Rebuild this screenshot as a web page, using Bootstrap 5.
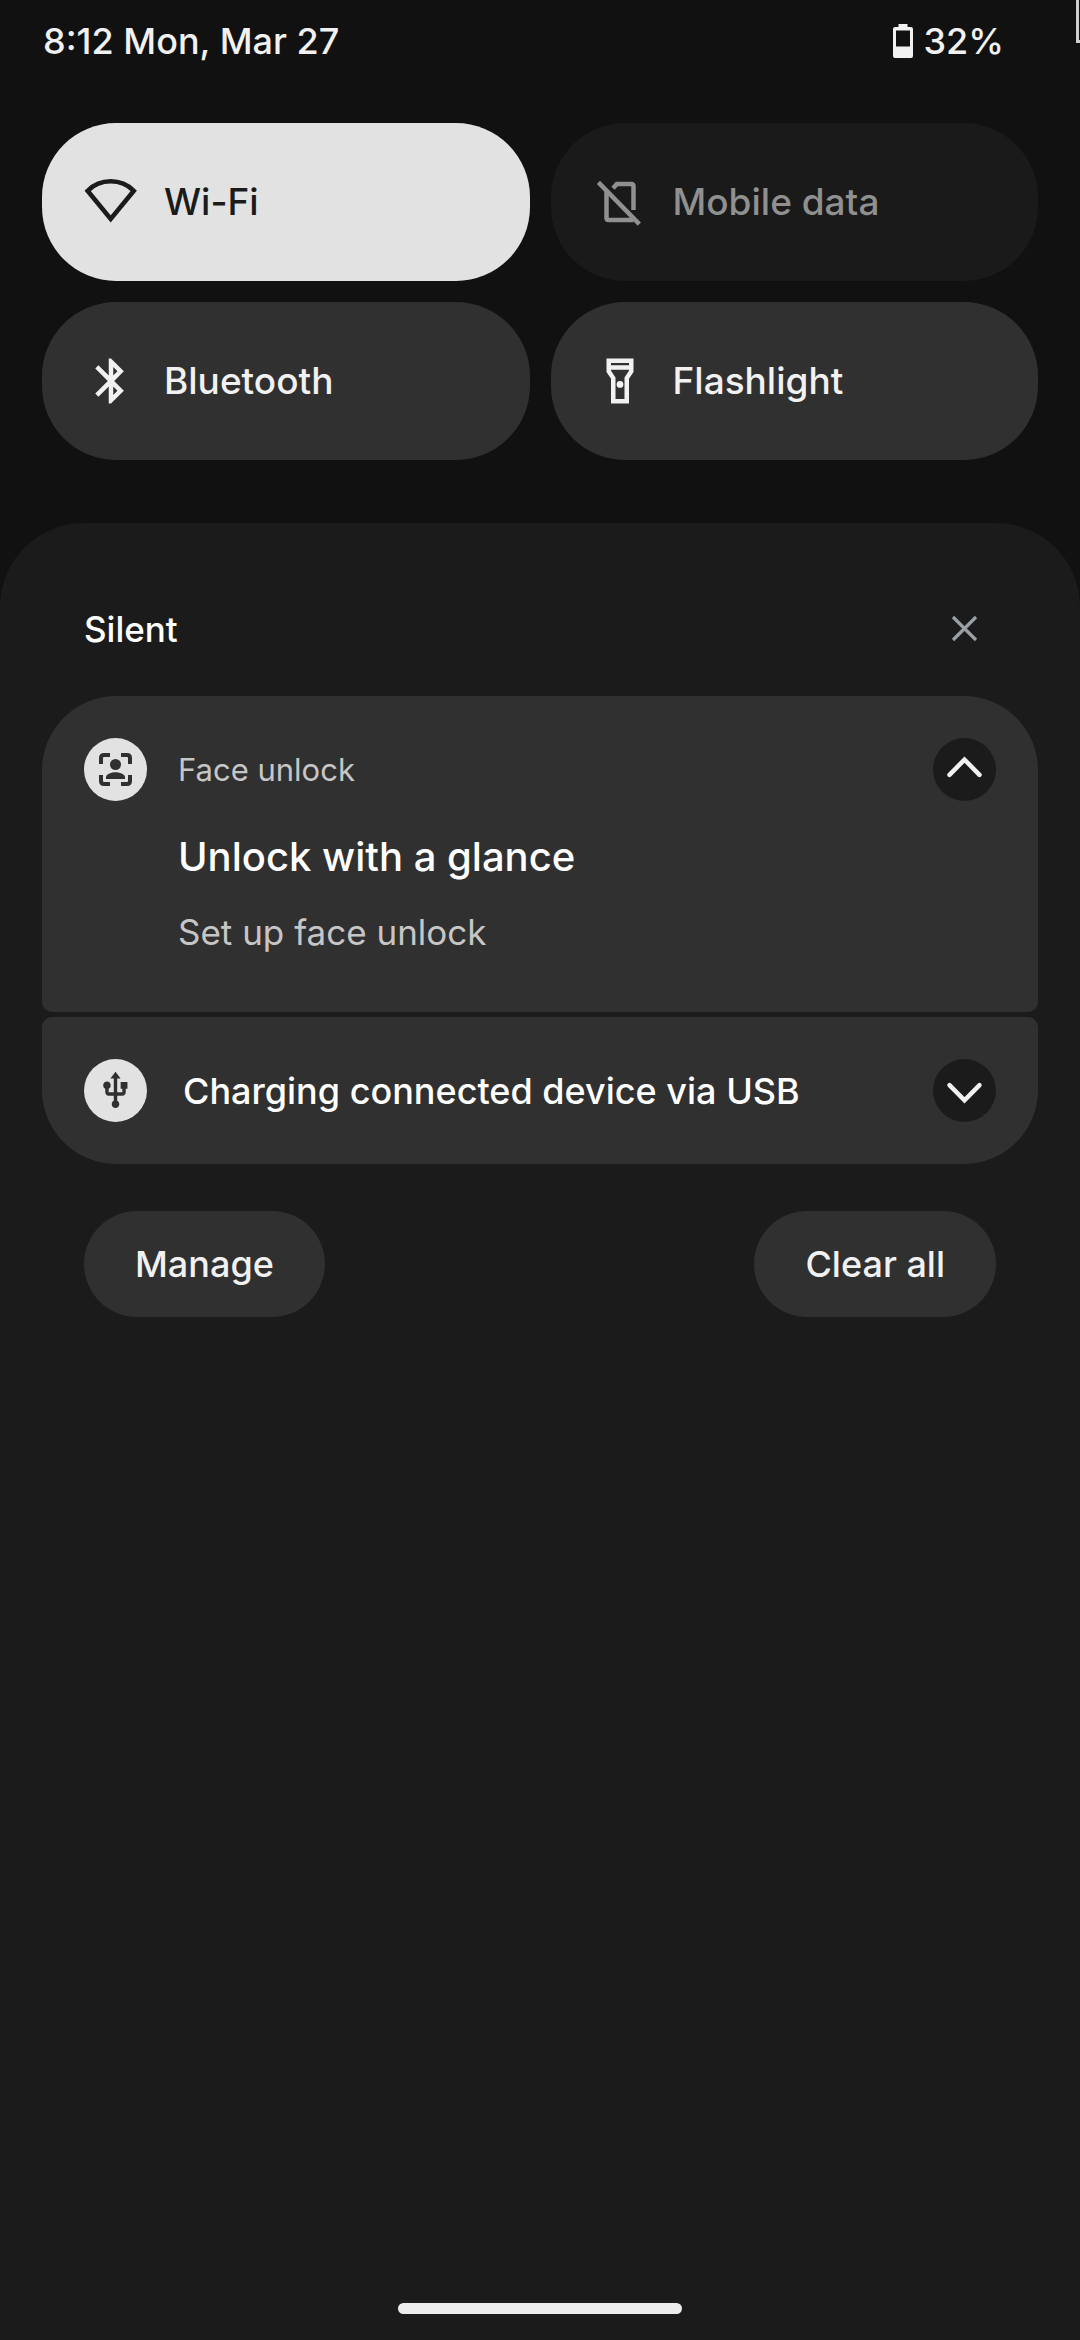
<!DOCTYPE html>
<html lang="en" data-bs-theme="dark">
<head>
<meta charset="utf-8">
<meta name="viewport" content="width=device-width, initial-scale=1">
<title>Notification shade</title>
<link href="https://cdn.jsdelivr.net/npm/bootstrap@5.3.0/dist/css/bootstrap.min.css" rel="stylesheet">
<style>
  :root {
    --shade: #111111;
    --panel: #1b1b1b;
    --surface: #303030;
    --accent: #e2e2e2;
    --ink: #f1f1f1;
    --muted: #c6c6c6;
  }
  body {
    background: var(--shade);
    color: var(--ink);
    font-family: Inter, Roboto, sans-serif;
    font-size: 36px;
    line-height: 48px;
  }
  svg { display: block; flex: none; }
  .status-bar { height: 82px; padding: 0 76px 0 43px; font-size: 36px; font-weight: 500; }
  .battery { gap: 8px; }
  .quick-tiles { padding: 41px 42px 63px; }
  .quick-tiles .row { --bs-gutter-x: 21px; --bs-gutter-y: 21px; }
  .tile {
    --bs-btn-color: var(--ink);
    --bs-btn-bg: var(--surface);
    --bs-btn-hover-bg: #3a3a3a;
    --bs-btn-hover-color: var(--ink);
    --bs-btn-border-width: 0;
    --bs-btn-border-radius: 74px;
    --bs-btn-padding-x: 42px;
    --bs-btn-font-size: 37px;
    --bs-btn-font-weight: 500;
    --bs-btn-disabled-bg: #1a1a1a;
    --bs-btn-disabled-color: #8f908f;
    --bs-btn-disabled-opacity: 1;
    height: 158px;
    gap: 26px;
  }
  .tile-on { --bs-btn-color: #1b1b1b; --bs-btn-bg: var(--accent); --bs-btn-hover-bg: #efefef; --bs-btn-hover-color: #1b1b1b; }
  .shade-panel { background: var(--panel); border-radius: 84px 84px 0 0; padding: 74px 42px 26px; }
  .section-head { padding: 0 42px; height: 63px; margin-bottom: 36px; }
  .section-title { font-size: 35px; font-weight: 500; line-height: 48px; }
  .round-btn { width: 63px; height: 63px; }
  .expander { background: var(--panel); }
  .stack { gap: 5px; }
  .notice { background: var(--surface); padding: 42px; border-radius: 10px; }
  .notice:first-child { border-top-left-radius: 74px; border-top-right-radius: 74px; }
  .notice:last-child { border-bottom-left-radius: 74px; border-bottom-right-radius: 74px; }
  .app-icon { width: 63px; height: 63px; background: var(--accent); }
  .notice-head { gap: 31px; }
  .notice-compact { gap: 36px; }
  .app-name { font-size: 31px; color: var(--muted); }
  .notice-body { padding: 31px 0 14px 94px; }
  .notice-title { font-size: 40px; font-weight: 500; line-height: 50px; margin-bottom: 26px; }
  .notice-text { font-size: 35px; color: var(--muted); }
  .notice-line { font-weight: 500; color: #fff; }
  .shade-actions { padding: 47px 42px 0; }
  .pill {
    --bs-btn-color: var(--ink);
    --bs-btn-bg: var(--surface);
    --bs-btn-hover-bg: #3a3a3a;
    --bs-btn-hover-color: var(--ink);
    --bs-btn-border-width: 0;
    --bs-btn-font-size: 36px;
    --bs-btn-font-weight: 500;
    --bs-btn-padding-x: 51px;
    height: 106px;
  }
  .home-bar { width: 284px; height: 11px; background: #ececec; }
  .edge-frame { width: 4px; height: 43px; border: 3px solid #cfcfcf; border-width: 0 0 3px 3px; }
</style>
</head>
<body class="d-flex flex-column min-vh-100">
  <div class="edge-frame position-absolute top-0 end-0" aria-hidden="true"></div>

  <header class="status-bar d-flex align-items-center justify-content-between">
    <span>8:12 Mon, Mar 27</span>
    <span class="battery d-flex align-items-center">
      <svg width="24" height="36" viewBox="0 0 24 36" fill="currentColor" aria-hidden="true">
        <path fill-rule="evenodd" d="M7.500 1h9v3H20a2 2 0 0 1 2 2v27a2 2 0 0 1-2 2H4a2 2 0 0 1-2-2V6a2 2 0 0 1 2-2h3.500zM5 7.500v16h14v-16z"/>
      </svg>
      <span>32%</span>
    </span>
  </header>

  <section class="quick-tiles" aria-label="Quick settings">
    <div class="row">
      <div class="col-6">
        <button type="button" class="btn tile tile-on w-100 d-flex align-items-center" aria-pressed="true">
          <svg width="54" height="54" viewBox="0 0 54 54" fill="none" stroke="currentColor" stroke-width="4.500" aria-hidden="true">
            <path d="M3.600 15.800A33 33 0 0 1 49.800 15.800L26.700 44z"/>
          </svg>
          <span>Wi-Fi</span>
        </button>
      </div>
      <div class="col-6">
        <button type="button" class="btn tile w-100 d-flex align-items-center" disabled>
          <svg width="54" height="54" viewBox="0 0 24 24" fill="none" stroke="currentColor" stroke-width="2" aria-hidden="true">
            <path d="M6 7V19q0 1 1 1H18M8.900 5.900L10.600 4H17q1 0 1 1V15.500"/>
            <path d="M2.400 3.300L20.600 21.800"/>
          </svg>
          <span>Mobile data</span>
        </button>
      </div>
      <div class="col-6">
        <button type="button" class="btn tile w-100 d-flex align-items-center" aria-pressed="false">
          <svg width="54" height="54" viewBox="0 0 24 24" fill="currentColor" aria-hidden="true">
            <path d="M17.710 7.710L12 2h-1v7.590L6.410 5 5 6.410 10.590 12 5 17.590 6.410 19 11 14.410V22h1l5.710-5.710-4.300-4.290 4.300-4.290zM13 5.830l1.880 1.880L13 9.590V5.830zm1.880 10.460L13 18.170v-3.760l1.880 1.880z"/>
          </svg>
          <span>Bluetooth</span>
        </button>
      </div>
      <div class="col-6">
        <button type="button" class="btn tile w-100 d-flex align-items-center" aria-pressed="false">
          <svg width="54" height="54" viewBox="0 0 24 24" fill="currentColor" aria-hidden="true">
            <path fill-rule="evenodd" d="M6 2v6l2 3v11h8V11l2-3V2zM8 4h8v1H8zM8 7h8v.400l-2 3V20h-4v-9.600l-2-3z"/>
            <circle cx="12" cy="13.500" r="1.500"/>
          </svg>
          <span>Flashlight</span>
        </button>
      </div>
    </div>
  </section>

  <main class="shade-panel flex-grow-1 d-flex flex-column">
    <div class="section-head d-flex align-items-center justify-content-between">
      <h2 class="section-title m-0">Silent</h2>
      <button type="button" class="btn round-btn rounded-circle border-0 p-0" aria-label="Clear silent notifications">
        <svg width="63" height="63" viewBox="0 0 63 63" fill="none" stroke="#9aa0a6" stroke-width="3.200" aria-hidden="true">
          <path d="M20 20l23 23M43 20l-23 23"/>
        </svg>
      </button>
    </div>

    <div class="stack d-flex flex-column">
      <article class="notice">
        <div class="notice-head d-flex align-items-center">
          <span class="app-icon rounded-circle">
            <svg width="63" height="63" viewBox="0 0 63 63" fill="none" aria-hidden="true">
              <path stroke="#303030" stroke-width="4" d="M17 26v-6q0-3 3-3h6M37 17h6q3 0 3 3v6M46 37v6q0 3-3 3h-6M26 46h-6q-3 0-3-3v-6"/>
              <circle cx="31.500" cy="26.500" r="5.500" fill="#303030"/>
              <path fill="#303030" d="M22 41v-2c0-3 6-4.800 9.500-4.800s9.500 1.800 9.500 4.800v2z"/>
            </svg>
          </span>
          <span class="app-name">Face unlock</span>
          <button type="button" class="btn round-btn expander rounded-circle border-0 p-0 ms-auto" aria-label="Collapse">
            <svg width="63" height="63" viewBox="0 0 63 63" fill="none" stroke="#f1f1f1" stroke-width="4.500" stroke-linecap="round" aria-hidden="true">
              <path d="M16.500 36.800l15-15.200 15 15.200"/>
            </svg>
          </button>
        </div>
        <div class="notice-body">
          <h3 class="notice-title">Unlock with a glance</h3>
          <p class="notice-text m-0">Set up face unlock</p>
        </div>
      </article>

      <article class="notice notice-compact d-flex align-items-center">
        <span class="app-icon rounded-circle d-flex align-items-center justify-content-center">
          <svg width="41" height="41" viewBox="0 0 24 24" fill="#303030" aria-hidden="true">
            <path d="M15 7v4h1v2h-3V5h2l-3-4-3 4h2v8H8v-2.070c.7-.370 1.200-1.080 1.200-1.930 0-1.210-.990-2.200-2.200-2.200-1.210 0-2.200.990-2.200 2.200 0 .850.5 1.560 1.200 1.930V13c0 1.110.890 2 2 2h3v3.050c-.710.370-1.200 1.100-1.200 1.950 0 1.220.990 2.200 2.200 2.200 1.210 0 2.200-.980 2.200-2.200 0-.850-.490-1.580-1.200-1.950V15h3c1.110 0 2-.890 2-2v-2h1V7h-4z"/>
          </svg>
        </span>
        <span class="notice-line">Charging connected device via USB</span>
        <button type="button" class="btn round-btn expander rounded-circle border-0 p-0 ms-auto" aria-label="Expand">
          <svg width="63" height="63" viewBox="0 0 63 63" fill="none" stroke="#f1f1f1" stroke-width="4.500" stroke-linecap="round" aria-hidden="true">
            <path d="M16.500 26.200l15 15.200 15-15.200"/>
          </svg>
        </button>
      </article>
    </div>

    <div class="shade-actions d-flex justify-content-between">
      <button type="button" class="btn pill rounded-pill">Manage</button>
      <button type="button" class="btn pill rounded-pill">Clear all</button>
    </div>

    <div class="home-bar rounded-pill mt-auto mx-auto" aria-hidden="true"></div>
  </main>
<script src="https://cdn.jsdelivr.net/npm/bootstrap@5.3.0/dist/js/bootstrap.bundle.min.js"></script>
</body>
</html>
